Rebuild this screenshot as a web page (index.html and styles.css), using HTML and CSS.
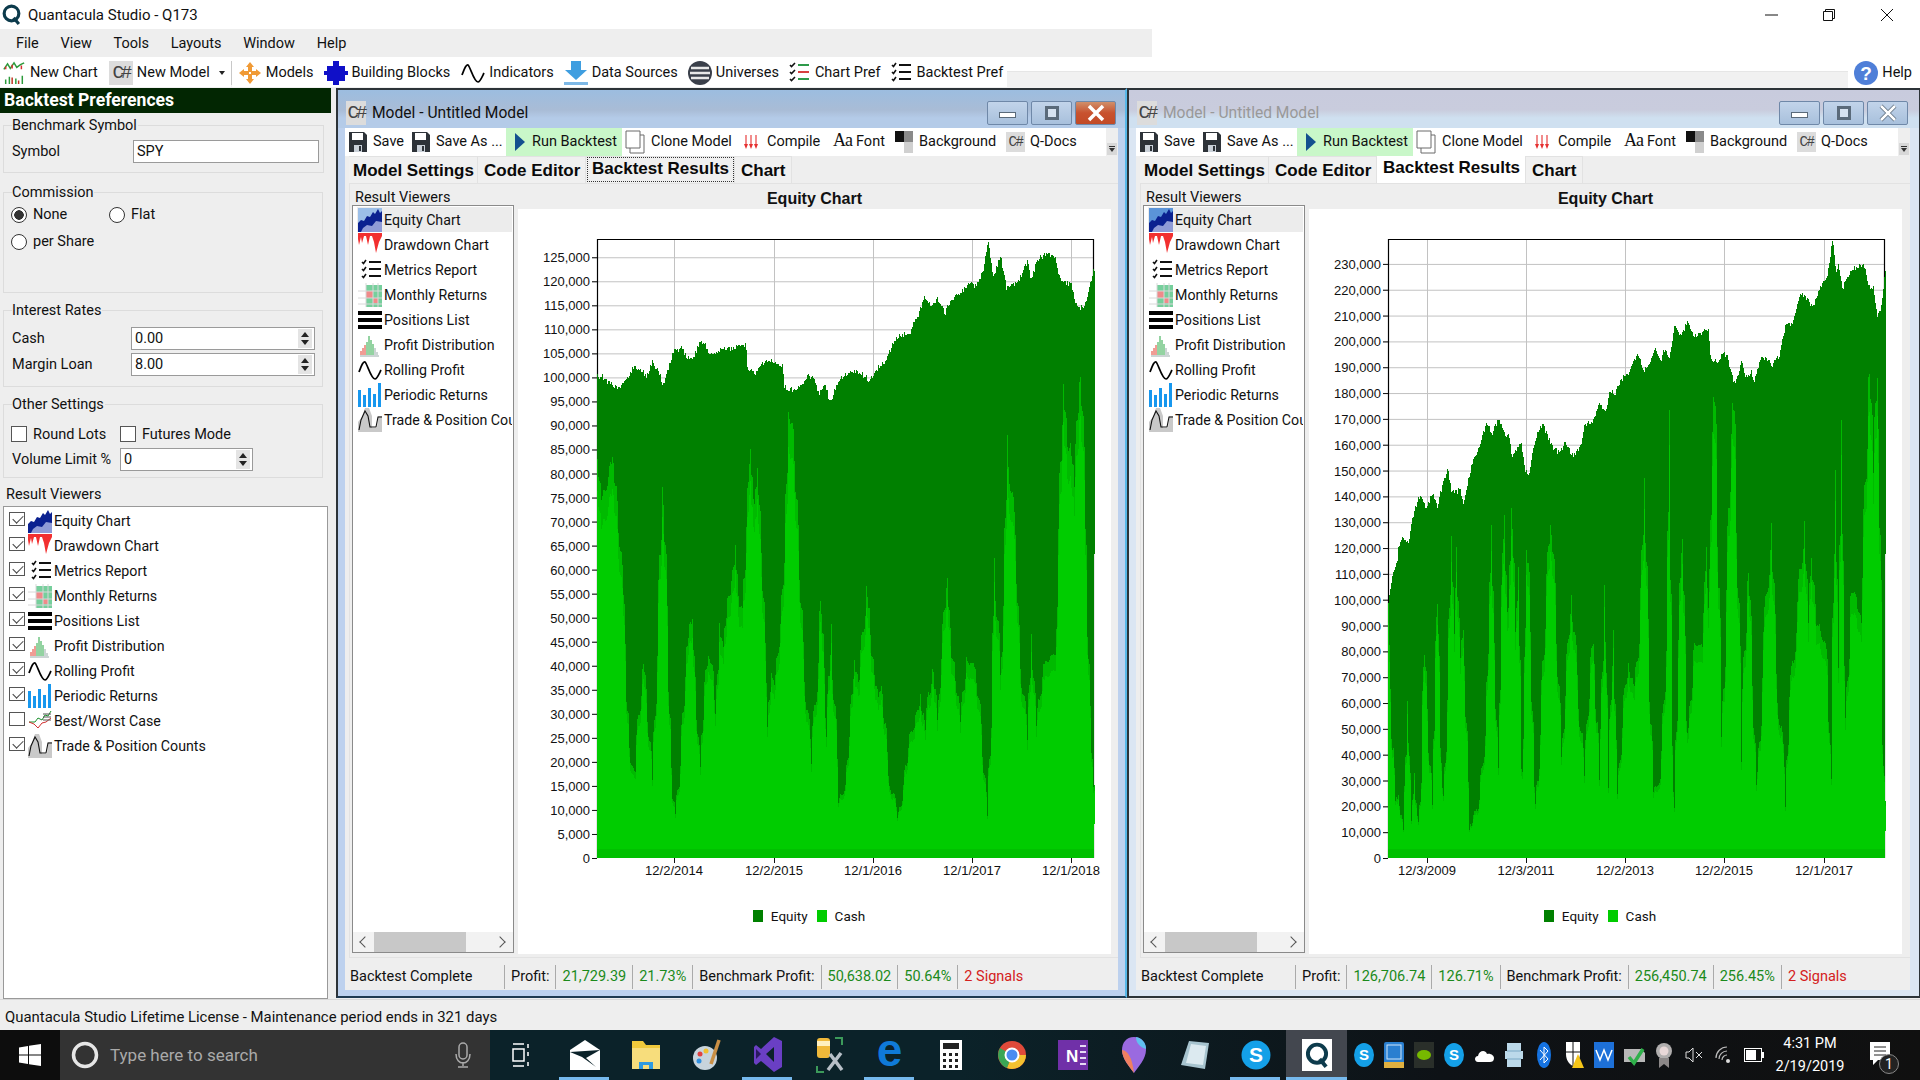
FILE: index.html
```html
<!DOCTYPE html>
<html lang="en">
<head>
<meta charset="utf-8">
<title>Quantacula Studio - Q173</title>
<link rel="stylesheet" href="styles.css">
</head>
<body>
<svg class="defs" width="0" height="0" aria-hidden="true">
  <symbol id="i-equity" viewBox="0 0 24 24"><path fill="#8f9bd6" d="M0 24V17L6 14 12 15 18 12 24 13V24Z"/><path fill="#0b2190" d="M0 24V15L3 12 6 13 9 8 12 9 15 4 17 6 20 1 22 5 24 3V14L18 13 14 18 9 17 5 20 3 24Z"/></symbol>
  <symbol id="i-drawdown" viewBox="0 0 24 24"><path fill="#f23030" d="M0 0H24V3L21 9 18 20 16 9 14 3 12 3 10 12 8 3 6 3 4 10 3 4 1 12 0 6Z"/></symbol>
  <symbol id="i-metrics" viewBox="0 0 24 24"><path fill="none" stroke="#111" stroke-width="1.6" d="M4 4l1.5 1.5L8 2M4 11l1.5 1.5L8 9M4 18l1.500 1.500L8 16"/><path fill="none" stroke="#111" stroke-width="2" d="M11 4H23M11 11H23M11 18H23"/></symbol>
  <symbol id="i-monthly" viewBox="0 0 24 24"><path fill="#76cf9c" d="M8 2H24V24H8Z"/><path fill="#f08a8a" d="M8 8H15V15H8ZM15 15H20V20H15Z"/><path stroke="#d8d8d8" fill="none" d="M0 8H24M0 15H24M0 21H24M8 0V24M15 0V24M20 0V24"/></symbol>
  <symbol id="i-positions" viewBox="0 0 24 24"><path d="M0 3H24V7H0ZM0 10H24V14H0ZM0 17H24V21H0Z"/></symbol>
  <symbol id="i-dist" viewBox="0 0 24 24"><path stroke="#e03a2a" fill="none" d="M3 22V18M5 22V15M7 22V12"/><path stroke="#28a745" fill="none" d="M9 22V9M11 22V3M13 22V7M15 22V11"/><path stroke="#9aa" fill="none" d="M17 22V15M19 22V19M2 23H21"/></symbol>
  <symbol id="i-rolling" viewBox="0 0 24 24"><path fill="none" stroke="#000" stroke-width="1.7" d="M1 14C3 9 5 3 7 4 9 5 13 21 17 21 19 21 21 16 23 12"/></symbol>
  <symbol id="i-periodic" viewBox="0 0 24 24"><path fill="#1797ee" d="M0 7H3V24H0ZM5 12H8V24H5ZM10 5H13V24H10ZM15 11H18V24H15ZM20 0H23V24H20Z"/></symbol>
  <symbol id="i-best" viewBox="0 0 24 24"><path fill="none" stroke="#1a8f2d" d="M1 13L7 13 10 9 14 11 17 6 20 7 23 2"/><path fill="none" stroke="#d23030" d="M1 13L6 15 10 19 14 14 18 13 23 9"/><path fill="none" stroke="#555" d="M15 5H23M15 8H23M15 11H23"/></symbol>
  <symbol id="i-trade" viewBox="0 0 24 24"><path fill="#c9c9c9" d="M0 24V14L4 9 7 0H11L14 8V20H19L20 8H24V24Z"/><path fill="none" stroke="#111" stroke-width="1.1" d="M1 22L3 12 7 3 10 8 12 19H18L20 9H24"/></symbol>
  <symbol id="i-save" viewBox="0 0 18 22"><path fill="#2d3238" d="M0 1H15L18 4V21H0Z"/><path fill="#fff" d="M3 2H14V9H3Z"/><path fill="#c9d0d8" d="M5 14H13V21H5Z"/><path fill="#2d3238" d="M10 15H12V20H10Z"/></symbol>
  <symbol id="i-clone" viewBox="0 0 20 24"><path fill="#fff" stroke="#6a6a6a" d="M5 5H19V23H5Z"/><path fill="#fff" stroke="#6a6a6a" d="M1 1H15V18H1Z"/></symbol>
  <symbol id="i-compile" viewBox="0 0 14 16"><path fill="none" stroke="#e63030" stroke-width="1.1" d="M2 1V11M7 1V11M12 1V11"/><path fill="#e63030" d="M0 10H4L2 15ZM5 10H9L7 15ZM10 10H14L12 15Z"/></symbol>
  <symbol id="i-bg" viewBox="0 0 18 22"><path fill="#111" d="M0 0H9V11H0Z"/><path fill="#8a8a8a" d="M9 0H18V11H9Z"/><path fill="#fff" d="M0 11H9V22H0Z"/><path fill="#d0d0d0" d="M9 11H18V22H9Z"/></symbol>
  <symbol id="i-run" viewBox="0 0 10 18"><path fill="#13508f" d="M0 0L10 9 0 18Z"/></symbol>
</svg>

<div class="titlebar">
  <svg class="q-logo" viewBox="0 0 18 20"><circle cx="9" cy="9" r="7" fill="none" stroke="#0d3b4c" stroke-width="3"/><path d="M11 13L16 19" stroke="#0d3b4c" stroke-width="3"/></svg>
  <span class="app-title">Quantacula Studio - Q173</span>
  <div class="sys-btns">
    <svg width="14" height="14" viewBox="0 0 14 14"><path d="M1 7H14" stroke="#111"/></svg>
    <svg width="14" height="14" viewBox="0 0 14 14"><path fill="none" stroke="#111" d="M1.500 3.500H10.500V12.500H1.500ZM3.500 3.500V1.500H12.500V10.500H10.500"/></svg>
    <svg width="14" height="14" viewBox="0 0 14 14"><path d="M1 1L13 13M13 1L1 13" stroke="#111"/></svg>
  </div>
</div>

<div class="menubar">
  <span>File</span><span>View</span><span>Tools</span><span>Layouts</span><span>Window</span><span>Help</span>
</div>

<div class="toolbar">
  <div class="tb-item tb-first">
    <svg class="tb-ico" viewBox="0 0 24 26"><path fill="none" stroke="#2b9a3a" stroke-width="1.6" d="M1 9L5 3 8 8 12 2 15 7 19 4 23 2"/><path fill="none" stroke="#d83030" stroke-width="1.6" d="M3 9V6M10 8V4M20 9V5"/><path stroke="#2b9a3a" stroke-width="1.600" d="M3 25V20M7 25V17M14 25V19M21 25V16"/><path stroke="#c23020" stroke-width="1.600" d="M10 25V18M17 25V21"/></svg>
    <span>New Chart</span>
  </div>
  <div class="tb-item tb-model"><span class="cs cs-main">C#</span><span>New Model</span><span class="caret"></span></div>
  <span class="tb-sep"></span>
  <div class="tb-item">
    <svg class="tb-ico" viewBox="0 0 24 24"><path fill="#f09a35" d="M12 1L16 6H14V10H18V8L23 12 18 16V14H14V18H16L12 23 8 18H10V14H6V16L1 12 6 8V10H10V6H8Z"/><path fill="#fff" d="M11 11H13V13H11Z"/></svg>
    <span>Models</span>
  </div>
  <div class="tb-item">
    <svg class="tb-ico" viewBox="0 0 24 24"><path fill="#1010c8" d="M9 0H15V5H21V10H24V14H21V20H15V24H9V20H3V14H0V10H3V5H9Z"/></svg>
    <span>Building Blocks</span>
  </div>
  <div class="tb-item">
    <svg class="tb-ico" viewBox="0 0 24 24"><use href="#i-rolling"/></svg>
    <span>Indicators</span>
  </div>
  <div class="tb-item">
    <svg class="tb-ico" viewBox="0 0 24 24"><path fill="#3f9ee0" d="M7 0H17V9H23L12 19 1 9H7Z"/><path fill="#7db8e6" d="M0 21H24V24H0Z"/></svg>
    <span>Data Sources</span>
  </div>
  <div class="tb-item">
    <svg class="tb-ico" viewBox="0 0 24 24"><circle cx="12" cy="12" r="12" fill="#3a3f4a"/><path d="M3 7H21M2 12H22M3 17H21" stroke="#e8e8e8" stroke-width="2.400"/></svg>
    <span>Universes</span>
  </div>
  <div class="tb-item">
    <svg class="tb-ico" viewBox="0 0 24 24"><path fill="none" stroke="#111" stroke-width="1.600" d="M3 4l1.500 1.500L8 2M3 11l1.500 1.500L8 9M3 18l1.500 1.500L8 16"/><path fill="none" stroke="#2e9a4a" stroke-width="2" d="M11 4H22M11 18H22"/><path fill="none" stroke="#d84040" stroke-width="2" d="M11 11H22"/></svg>
    <span>Chart Pref</span>
  </div>
  <div class="tb-item">
    <svg class="tb-ico" viewBox="0 0 24 24"><use href="#i-metrics"/></svg>
    <span>Backtest Pref</span>
  </div>
  <div class="tb-help">
    <svg class="tb-ico" viewBox="0 0 24 24"><circle cx="12" cy="12" r="12" fill="#4f7fd8"/><text x="12" y="19" class="help-q">?</text></svg>
    <span>Help</span>
  </div>
</div>

<div class="workspace">
  <aside class="prefs">
    <h2 class="prefs-head">Backtest Preferences</h2>

    <fieldset class="grp grp-bench">
      <legend>Benchmark Symbol</legend>
      <div class="form-row"><label>Symbol</label><div class="input">SPY</div></div>
    </fieldset>

    <fieldset class="grp grp-comm">
      <legend>Commission</legend>
      <div class="radio-grid">
        <div class="opt"><span class="radio on"></span>None</div>
        <div class="opt"><span class="radio"></span>Flat</div>
        <div class="opt"><span class="radio"></span>per Share</div>
      </div>
    </fieldset>

    <fieldset class="grp grp-rates">
      <legend>Interest Rates</legend>
      <div class="rate-rows">
        <div class="form-row form-rate"><label>Cash</label><div class="input spin">0.00<span class="spinner"><i class="up"></i><i class="down"></i></span></div></div>
        <div class="form-row form-rate"><label>Margin Loan</label><div class="input spin">8.00<span class="spinner"><i class="up"></i><i class="down"></i></span></div></div>
      </div>
    </fieldset>

    <fieldset class="grp grp-other">
      <legend>Other Settings</legend>
      <div class="check-row">
        <div class="opt opt-lots"><span class="cb big"></span>Round Lots</div>
        <div class="opt"><span class="cb big"></span>Futures Mode</div>
      </div>
      <div class="form-row form-vol"><label>Volume Limit %</label><div class="input spin">0<span class="spinner"><i class="up"></i><i class="down"></i></span></div></div>
    </fieldset>

    <div class="rv-label">Result Viewers</div>
    <div class="rv-list">
      <div class="rv-row"><span class="cb on"></span><svg class="ico"><use href="#i-equity"/></svg>Equity Chart</div>
      <div class="rv-row"><span class="cb on"></span><svg class="ico"><use href="#i-drawdown"/></svg>Drawdown Chart</div>
      <div class="rv-row"><span class="cb on"></span><svg class="ico"><use href="#i-metrics"/></svg>Metrics Report</div>
      <div class="rv-row"><span class="cb on"></span><svg class="ico"><use href="#i-monthly"/></svg>Monthly Returns</div>
      <div class="rv-row"><span class="cb on"></span><svg class="ico"><use href="#i-positions"/></svg>Positions List</div>
      <div class="rv-row"><span class="cb on"></span><svg class="ico"><use href="#i-dist"/></svg>Profit Distribution</div>
      <div class="rv-row"><span class="cb on"></span><svg class="ico"><use href="#i-rolling"/></svg>Rolling Profit</div>
      <div class="rv-row"><span class="cb on"></span><svg class="ico"><use href="#i-periodic"/></svg>Periodic Returns</div>
      <div class="rv-row"><span class="cb"></span><svg class="ico"><use href="#i-best"/></svg>Best/Worst Case</div>
      <div class="rv-row"><span class="cb on"></span><svg class="ico"><use href="#i-trade"/></svg>Trade &amp; Position Counts</div>
    </div>
  </aside>

  <section class="win win-active">
    <div class="win-title">
      <span class="cs cs-title">C#</span>
      <span class="win-name">Model - Untitled Model</span>
      <div class="win-btns">
        <span class="wb"><i class="wb-min"></i></span>
        <span class="wb"><i class="wb-max"></i></span>
        <span class="wb wb-close"><svg width="18" height="18" viewBox="0 0 18 18"><path d="M2 2L16 16M16 2L2 16" stroke="#fff" stroke-width="3.500"/></svg></span>
      </div>
    </div>
    <div class="win-tools">
      <div class="wt wt-save"><svg class="wt-ico"><use href="#i-save"/></svg>Save</div>
      <div class="wt wt-saveas"><svg class="wt-ico"><use href="#i-save"/></svg>Save As ...</div>
      <div class="wt wt-run"><svg class="run-ico"><use href="#i-run"/></svg>Run Backtest</div>
      <div class="wt wt-clone"><svg class="clone-ico"><use href="#i-clone"/></svg>Clone Model</div>
      <div class="wt wt-compile"><svg class="comp-ico"><use href="#i-compile"/></svg>Compile</div>
      <div class="wt wt-font"><span class="aa">Aa</span>Font</div>
      <div class="wt wt-bg"><svg class="wt-ico"><use href="#i-bg"/></svg>Background</div>
      <div class="wt wt-docs"><span class="cs cs-tool">C#</span>Q-Docs</div>
      <div class="overflow"><i></i></div>
    </div>
    <div class="tabs">
      <span class="tab">Model Settings</span><span class="tab">Code Editor</span><span class="tab tab-focus">Backtest Results</span><span class="tab">Chart</span>
    </div>
    <div class="pane">
      <div class="pane-left">
        <div class="pane-label">Result Viewers</div>
        <div class="viewer-list">
          <div class="viewer-rows">
            <div class="v-row v-sel"><svg class="ico ico-sel"><use href="#i-equity"/></svg>Equity Chart</div>
            <div class="v-row"><svg class="ico"><use href="#i-drawdown"/></svg>Drawdown Chart</div>
            <div class="v-row"><svg class="ico"><use href="#i-metrics"/></svg>Metrics Report</div>
            <div class="v-row"><svg class="ico"><use href="#i-monthly"/></svg>Monthly Returns</div>
            <div class="v-row"><svg class="ico"><use href="#i-positions"/></svg>Positions List</div>
            <div class="v-row"><svg class="ico"><use href="#i-dist"/></svg>Profit Distribution</div>
            <div class="v-row"><svg class="ico"><use href="#i-rolling"/></svg>Rolling Profit</div>
            <div class="v-row"><svg class="ico"><use href="#i-periodic"/></svg>Periodic Returns</div>
            <div class="v-row"><svg class="ico"><use href="#i-trade"/></svg>Trade &amp; Position Counts</div>
          </div>
          <div class="hscroll"><span class="chev chev-l"></span><span class="thumb"></span><span class="chev chev-r"></span></div>
        </div>
      </div>
      <div class="pane-right">
        <div class="chart-title">Equity Chart</div>
        <div class="chart-box">
          <svg class="chart" id="chart1" viewBox="518 209 593 690"></svg>
          <div class="legend"><i class="sw sw-eq"></i><span>Equity</span><i class="sw sw-cash"></i><span>Cash</span></div>
        </div>
      </div>
    </div>
    <div class="win-status">
      <span class="st st-first">Backtest Complete</span>
      <span class="st">Profit:</span>
      <span class="st st-g">21,729.39</span>
      <span class="st st-g">21.73%</span>
      <span class="st">Benchmark Profit:</span>
      <span class="st st-g">50,638.02</span>
      <span class="st st-g">50.64%</span>
      <span class="st st-r">2 Signals</span>
    </div>
  </section>

  <section class="win win-inactive">
    <div class="win-title">
      <span class="cs cs-title">C#</span>
      <span class="win-name">Model - Untitled Model</span>
      <div class="win-btns">
        <span class="wb"><i class="wb-min"></i></span>
        <span class="wb"><i class="wb-max"></i></span>
        <span class="wb"><svg width="18" height="18" viewBox="0 0 18 18"><path d="M2 2L16 16M16 2L2 16" stroke="#5a6a7a" stroke-width="4"/><path d="M2 2L16 16M16 2L2 16" stroke="#fff" stroke-width="2.500"/></svg></span>
      </div>
    </div>
    <div class="win-tools">
      <div class="wt wt-save"><svg class="wt-ico"><use href="#i-save"/></svg>Save</div>
      <div class="wt wt-saveas"><svg class="wt-ico"><use href="#i-save"/></svg>Save As ...</div>
      <div class="wt wt-run"><svg class="run-ico"><use href="#i-run"/></svg>Run Backtest</div>
      <div class="wt wt-clone"><svg class="clone-ico"><use href="#i-clone"/></svg>Clone Model</div>
      <div class="wt wt-compile"><svg class="comp-ico"><use href="#i-compile"/></svg>Compile</div>
      <div class="wt wt-font"><span class="aa">Aa</span>Font</div>
      <div class="wt wt-bg"><svg class="wt-ico"><use href="#i-bg"/></svg>Background</div>
      <div class="wt wt-docs"><span class="cs cs-tool">C#</span>Q-Docs</div>
      <div class="overflow"><i></i></div>
    </div>
    <div class="tabs">
      <span class="tab">Model Settings</span><span class="tab">Code Editor</span><span class="tab tab-white">Backtest Results</span><span class="tab">Chart</span>
    </div>
    <div class="pane">
      <div class="pane-left">
        <div class="pane-label">Result Viewers</div>
        <div class="viewer-list">
          <div class="viewer-rows">
            <div class="v-row v-sel"><svg class="ico ico-sel2"><use href="#i-equity"/></svg>Equity Chart</div>
            <div class="v-row"><svg class="ico"><use href="#i-drawdown"/></svg>Drawdown Chart</div>
            <div class="v-row"><svg class="ico"><use href="#i-metrics"/></svg>Metrics Report</div>
            <div class="v-row"><svg class="ico"><use href="#i-monthly"/></svg>Monthly Returns</div>
            <div class="v-row"><svg class="ico"><use href="#i-positions"/></svg>Positions List</div>
            <div class="v-row"><svg class="ico"><use href="#i-dist"/></svg>Profit Distribution</div>
            <div class="v-row"><svg class="ico"><use href="#i-rolling"/></svg>Rolling Profit</div>
            <div class="v-row"><svg class="ico"><use href="#i-periodic"/></svg>Periodic Returns</div>
            <div class="v-row"><svg class="ico"><use href="#i-trade"/></svg>Trade &amp; Position Counts</div>
          </div>
          <div class="hscroll"><span class="chev chev-l"></span><span class="thumb"></span><span class="chev chev-r"></span></div>
        </div>
      </div>
      <div class="pane-right">
        <div class="chart-title">Equity Chart</div>
        <div class="chart-box">
          <svg class="chart" id="chart2" viewBox="1309 209 593 690"></svg>
          <div class="legend"><i class="sw sw-eq"></i><span>Equity</span><i class="sw sw-cash"></i><span>Cash</span></div>
        </div>
      </div>
    </div>
    <div class="win-status">
      <span class="st st-first">Backtest Complete</span>
      <span class="st">Profit:</span>
      <span class="st st-g">126,706.74</span>
      <span class="st st-g">126.71%</span>
      <span class="st">Benchmark Profit:</span>
      <span class="st st-g">256,450.74</span>
      <span class="st st-g">256.45%</span>
      <span class="st st-r">2 Signals</span>
    </div>
  </section>
</div>

<div class="statusbar">Quantacula Studio Lifetime License - Maintenance period ends in 321 days</div>

<div class="taskbar">
  <div class="tk-start"><svg width="22" height="22" viewBox="0 0 22 22"><path fill="#fff" d="M0 3.500L9 2V10.500H0ZM10 1.800L22 0V10.500H10ZM0 11.500H9V20L0 18.500ZM10 11.500H22V22L10 20.200Z"/></svg></div>
  <div class="tk-search">
    <svg class="cortana" width="28" height="28" viewBox="0 0 28 28"><circle cx="14" cy="14" r="11.500" fill="none" stroke="#e6e6e6" stroke-width="3.500"/></svg>
    <span class="search-text">Type here to search</span>
    <svg class="mic" width="16" height="26" viewBox="0 0 16 26"><rect x="4" y="1" width="8" height="16" rx="4" fill="none" stroke="#aaa" stroke-width="1.500"/><path d="M1 12C1 24 15 24 15 12M8 20V24M3 25H13" fill="none" stroke="#aaa" stroke-width="1.500"/></svg>
  </div>
  <div class="tk-view"><svg width="20" height="24" viewBox="0 0 20 24"><path fill="none" stroke="#fff" stroke-width="1.500" d="M1 1H12M1 23H12M1 6H12V18H1ZM16 1V5M16 9V13M16 19V23"/></svg></div>
  <div class="tile tile-open"><svg width="30" height="30" viewBox="0 0 30 30"><path fill="#fff" d="M0 10L15 0 30 10V30H0Z"/><path fill="#0b2229" d="M0 12L30 10 16 18 26 27 12 17Z"/></svg></div>
  <div class="tile"><svg width="30" height="30" viewBox="0 0 30 30"><path fill="#f0c93c" d="M1 1H12L15 5H29V29H1Z"/><path fill="#f7dd7c" d="M1 8H29V29H1Z"/><path fill="#2f9ae0" d="M8 22H22V29H18V25H12V29H8Z"/></svg></div>
  <div class="tile"><svg width="30" height="32" viewBox="0 0 30 32"><ellipse cx="13" cy="19" rx="12" ry="12" fill="#c8d4dc"/><circle cx="8" cy="15" r="2.500" fill="#e04040"/><circle cx="14" cy="12" r="2.500" fill="#f0c030"/><circle cx="7" cy="22" r="2.500" fill="#3090e0"/><path d="M27 1L19 25" stroke="#c98f45" stroke-width="3.500"/></svg></div>
  <div class="tile tile-open"><svg width="28" height="36" viewBox="0 0 28 36"><path fill="#6a3fc4" d="M20 0L28 4V30L20 35 7 24 2 28 0 26V10L2 8 7 12ZM20 10L12 17 20 25Z"/><path fill="#2a1a60" d="M2 12L7 17 2 22Z"/></svg></div>
  <div class="tile"><svg width="30" height="38" viewBox="0 0 30 38"><rect x="3" y="2" width="13" height="20" rx="3" fill="#f0b93a"/><rect x="3" y="5" width="13" height="5" fill="#fff0c0"/><path d="M21 2H28V9M3 30V36H10" fill="none" stroke="#3c9a5a" stroke-width="2"/><path d="M14 34L27 17M16 18L28 34" stroke="#b8c0c8" stroke-width="3.500"/></svg></div>
  <div class="tile tile-open"><span class="edge-e">e</span></div>
  <div class="tile"><svg width="22" height="30" viewBox="0 0 22 30"><path fill="#fff" d="M0 0H22V30H0Z"/><path fill="#222" d="M3 3H19V9H3ZM3 13H6V16H3ZM9 13H12V16H9ZM15 13H18V16H15ZM3 19H6V22H3ZM9 19H12V22H9ZM15 19H18V22H15ZM3 25H6V28H3ZM9 25H12V28H9ZM15 25H18V28H15Z"/></svg></div>
  <div class="tile"><svg width="28" height="28" viewBox="0 0 28 28"><circle cx="14" cy="14" r="14" fill="#e04a3a"/><path fill="#f3c12f" d="M14 14L28 14A14 14 0 0 1 9 27Z"/><path fill="#3aa655" d="M14 14L9 27A14 14 0 0 1 2 7Z"/><circle cx="14" cy="14" r="6.500" fill="#4a8cf0" stroke="#fff" stroke-width="2"/></svg></div>
  <div class="tile"><svg width="30" height="30" viewBox="0 0 30 30"><rect width="30" height="30" fill="#7030a8"/><text x="8" y="22" class="one-n">N</text><path d="M22 6H28M22 12H28M22 18H28M22 24H28" stroke="#e6d8f4" stroke-width="2"/></svg></div>
  <div class="tile"><svg width="24" height="36" viewBox="0 0 24 36"><path fill="#9a6ae0" d="M12 0C20 0 24 6 24 13 24 22 16 30 12 36 8 30 0 22 0 13 0 6 4 0 12 0Z"/><path fill="#f08060" d="M0 13C6 14 10 20 12 36 8 30 0 22 0 13Z"/><path fill="#60c0f0" d="M14 0C20 1 24 6 24 12 18 10 14 6 14 0Z"/></svg></div>
  <div class="tile"><svg width="28" height="32" viewBox="0 0 28 32"><path fill="#a7c4cf" d="M8 2L28 4 24 30 0 26Z"/><path fill="#dceaf0" d="M10 5L25 7 22 26 5 24Z"/></svg></div>
  <div class="tile tile-open"><svg width="30" height="30" viewBox="0 0 30 30"><circle cx="15" cy="15" r="14.500" fill="#14a0e8"/><text x="15" y="22" class="sky-s">S</text></svg></div>
  <div class="tile tile-q"><div class="q-box"><svg width="24" height="26" viewBox="0 0 18 20"><circle cx="9" cy="9" r="7" fill="none" stroke="#0d3b4c" stroke-width="3"/><path d="M11 13L16 19" stroke="#0d3b4c" stroke-width="3"/></svg></div></div>

  <div class="tray">
    <svg width="20" height="26" viewBox="0 0 20 26"><ellipse cx="10" cy="13" rx="10" ry="12" fill="#14a0e8"/><text x="10" y="18" class="tray-s">S</text></svg>
    <svg width="20" height="26" viewBox="0 0 20 26"><rect width="20" height="26" rx="2" fill="#2a7fd0"/><rect x="3" y="3" width="14" height="14" fill="none" stroke="#cfe6f8"/><rect y="20" width="20" height="6" fill="#e0b040"/></svg>
    <svg width="20" height="26" viewBox="0 0 20 26"><rect width="20" height="26" fill="#2a2f2a"/><ellipse cx="10" cy="13" rx="7" ry="5" fill="#76b900"/></svg>
    <svg width="20" height="26" viewBox="0 0 20 26"><ellipse cx="10" cy="13" rx="10" ry="12" fill="#14a0e8"/><text x="10" y="18" class="tray-s">S</text></svg>
    <svg width="20" height="14" viewBox="0 0 20 14"><path fill="#fff" d="M4 14C0 14 0 8 4 8 5 3 11 1 13 6 17 5 20 8 20 10 20 13 18 14 16 14Z"/></svg>
    <svg width="18" height="24" viewBox="0 0 18 24"><path fill="#bcd9ea" d="M2 0H16V8H18V16H16V24H2V16H0V8H2Z"/><path stroke="#7aa8c4" d="M2 8H16M2 16H16"/></svg>
    <svg width="14" height="26" viewBox="0 0 14 26"><ellipse cx="7" cy="13" rx="7" ry="13" fill="#1572e0"/><path fill="none" stroke="#fff" d="M3 8L11 17 7 21V5L11 9 3 18"/></svg>
    <svg width="20" height="26" viewBox="0 0 20 26"><path fill="#fff" d="M2 0H16V12C16 18 12 22 9 24 5 22 2 18 2 12Z"/><path stroke="#111" d="M9 0V24M2 10H16"/><path fill="#f5c518" d="M14 12L20 26H8Z"/></svg>
    <svg width="20" height="26" viewBox="0 0 20 26"><rect width="20" height="26" fill="#1d70d8"/><path fill="none" stroke="#fff" stroke-width="1.500" d="M2 8L6 18 10 8 14 18 18 8"/></svg>
    <svg width="22" height="22" viewBox="0 0 22 22"><path fill="#b8b8b8" d="M1 5H18L22 9V18H1Z"/><path fill="none" stroke="#2fb04a" stroke-width="3.500" d="M6 13L11 19 20 5"/></svg>
    <svg width="18" height="26" viewBox="0 0 18 26"><circle cx="9" cy="9" r="8" fill="#b0aeae"/><circle cx="9" cy="9" r="4.500" fill="#e8d8d8"/><path fill="#8c8888" d="M4 16H14V26L9 22 4 26Z"/></svg>
    <svg width="18" height="18" viewBox="0 0 18 18"><path fill="none" stroke="#ddd" d="M1 6H4L8 2V16L4 12H1ZM11 6L17 12M17 6L11 12"/></svg>
    <svg width="18" height="18" viewBox="0 0 18 18"><path fill="none" stroke="#bbb" stroke-width="1.200" d="M1 12A11 11 0 0 1 12 1M4 13A8 8 0 0 1 12 5M7 14A5 5 0 0 1 12 9"/><circle cx="13" cy="15" r="2" fill="#ddd"/></svg>
    <svg width="20" height="14" viewBox="0 0 20 14"><rect x=".5" y=".5" width="17" height="13" fill="none" stroke="#fff"/><rect x="2" y="2" width="10" height="10" fill="#fff"/><rect x="18" y="4" width="2" height="6" fill="#fff"/></svg>
  </div>
  <div class="clock"><span>4:31 PM</span><span>2/19/2019</span></div>
  <div class="notif">
    <svg width="20" height="26" viewBox="0 0 20 26"><path fill="#fff" d="M0 0H20V18H8L3 23V18H0Z"/><path stroke="#222" d="M4 5H16M4 9H16M4 13H16"/></svg>
    <span class="notif-badge">1</span>
  </div>
</div>
<script src="chart.js"></script>
</body>
</html>
```
FILE: styles.css
```css
* { box-sizing: border-box; }
html, body { margin: 0; padding: 0; }
body {
  width: 1920px; height: 1080px; overflow: hidden;
  display: flex; flex-direction: column;
  background: #fff; color: #111;
  font: 14.5px/18px Roboto, "Liberation Sans", sans-serif;
}
.defs { position: absolute; }
i { display: block; }

/* title + menu + toolbar */
.titlebar { height: 29px; display: flex; align-items: center; padding-left: 2px; }
.q-logo { width: 19px; height: 21px; margin-right: 7px; }
.app-title { font-size: 15px; }
.sys-btns { margin-left: auto; width: 156px; padding-right: 26px; display: flex; justify-content: space-between; }
.menubar { height: 28px; width: 1152px; background: #eee; display: flex; align-items: center; gap: 21.7px; padding: 2px 0 0 16px; }
.toolbar {
  height: 31px; display: flex; align-items: center;
  background: linear-gradient(#fff 0, #fff 14px, #e6e6e6 14px, #e6e6e6 15px, #f1f1f1 15px);
}
.tb-item { display: flex; align-items: center; gap: 4px; height: 28px; background: #fff; padding: 0 4px 0 6px; flex: none; }
.tb-item:nth-child(9) { padding-right: 2px; }
.tb-item:nth-child(8) { padding-right: 2px; }
.tb-item:nth-child(5) { padding-right: 5px; }
.tb-first { padding-left: 2px; }
.tb-model { padding-left: 7px; }
.tb-ico { width: 24px; height: 24px; flex: none; }
.caret { width: 0; height: 0; border: 3px solid transparent; border-top: 4px solid #222; border-bottom: 0; margin: 0 2px 0 5px; }
.tb-sep { width: 1px; height: 24px; background: #c8c8c8; flex: none; }
.tb-help { margin-left: auto; display: flex; align-items: center; gap: 4px; height: 30px; padding: 0 8px 0 6px; background: #fff; }
.help-q { font: bold 19px "Liberation Sans", sans-serif; fill: #fff; text-anchor: middle; }
.cs { font-family: "Liberation Mono", monospace; color: #444; background: #dcdcdc; display: inline-block; text-align: center; flex: none; }
.cs-main { width: 24px; height: 24px; line-height: 24px; font-size: 19px; letter-spacing: -3px; }
.cs-title { width: 20px; height: 24px; line-height: 24px; font-size: 19px; letter-spacing: -3px; }
.cs-tool { width: 19px; height: 20px; line-height: 20px; font-size: 14px; letter-spacing: -1.5px; margin-right: 5px; }

/* workspace */
.workspace { height: 911px; display: flex; background: #eee; }
.prefs { width: 336px; flex: none; padding-right: 5px; }
.prefs-head { margin: 0; height: 25px; background: #022602; color: #fff; font: bold 17.6px/25px Roboto, sans-serif; padding-left: 4px; }
.grp { margin: 0 7px 0 3px; padding: 0 7px; border: 1px solid #dcdcdc; min-width: 0; }
.grp legend { padding: 0 1px 0 0; margin-left: 1px; line-height: 17px; height: 16px; }
.grp-bench { height: 56px; margin-top: 4px; margin-right: 7px; padding-top: 7px; }
.grp-comm { height: 109px; margin-top: 11px; margin-right: 8px; padding-top: 4px; }
.grp-rates { height: 85px; margin-top: 9px; margin-right: 8px; padding-top: 9px; }
.grp-other { height: 82px; margin-top: 9px; margin-right: 8px; padding-top: 14px; }
.form-row { display: grid; grid-template-columns: 121px 186px; align-items: center; padding-left: 1px; }
.form-row label { padding-top: 1px; }
.form-rate { grid-template-columns: 119px 184px; }
.rate-rows { display: flex; flex-direction: column; gap: 3px; }
.form-vol { grid-template-columns: 108px 133px; margin-top: 6px; }
.input { height: 23px; line-height: 22px; background: #fff; border: 1px solid #9a9a9a; padding-left: 3px; position: relative; }
.spinner { position: absolute; top: 1px; right: 2px; width: 14px; height: 19px; background: #e4e4e4; display: flex; flex-direction: column; gap: 3px; align-items: center; justify-content: center; }
.spinner .up { border: 4px solid transparent; border-top: 0; border-bottom: 5px solid #222; }
.spinner .down { border: 4px solid transparent; border-bottom: 0; border-top: 5px solid #222; }
.radio-grid { display: grid; grid-template-columns: 98px 1fr; row-gap: 5px; }
.opt { display: flex; align-items: center; gap: 6px; height: 22px; }
.radio { width: 16px; height: 16px; border-radius: 50%; border: 1px solid #333; background: #fff; flex: none; }
.radio.on { background: radial-gradient(circle, #333 0 4.500px, #fff 5px); }
.check-row { display: flex; height: 16px; align-items: center; }
.check-row .opt { height: 16px; padding-top: 1px; }
.check-row .cb { margin-top: -1px; }
.opt-lots { width: 109px; }
.cb { width: 16px; height: 14px; border: 1px solid #555; background: #fff; flex: none; position: relative; display: block; }
.cb.big { height: 16px; }
.rv-row .cb { margin-top: -3px; }
.cb.on::after { content: ""; position: absolute; left: 3px; top: 2px; width: 9px; height: 5px; border-left: 1.500px solid #444; border-bottom: 1.500px solid #444; transform: rotate(-45deg); }
.rv-label { margin: 8px 0 0 6px; height: 20px; line-height: 18px; }
.rv-list { margin: 0 3px; height: 493px; width: 325px; background: #fff; border: 1px solid #999; padding: 1px 0 0 5px; }
.rv-row { height: 25px; display: flex; align-items: center; font-size: 14.2px; }
.rv-row .ico { margin: 0 2px 0 3px; }
.ico { width: 24px; height: 24px; flex: none; }

/* child windows */
.win { display: flex; flex-direction: column; height: 910px; border: 2px solid #2c3338; padding: 0 7px 6px; }
.win-active { width: 791px; background: #bdd1ee; border-right-color: #58b8e8; border-bottom-color: #1f3a50; }
.win-inactive { width: 793px; background: #dbe6f3; padding-right: 9px; border-right: 1px solid #2c3338; }
.win-title { height: 38px; flex: none; display: flex; align-items: center; gap: 3px; background: linear-gradient(#9cbde0 0, #a9bcd6 20px, #b4cbe8 28px); margin: 0 -7px; padding: 8px 9px 0 8px; }
.win-name { font-size: 15.6px; margin-left: 3px; }
.win-inactive .win-title { background: linear-gradient(#c8cbdd 0, #c9ccdd 20px, #cfe0f0 28px); margin-right: -9px; padding-right: 11px; }
.win-inactive .win-name { color: #999; }
.win-btns { margin-left: auto; display: flex; gap: 3px; }
.wb { width: 41px; height: 24px; border: 1px solid #6f88a8; border-radius: 2px; background: linear-gradient(#c2d4ea, #a8c0dc); display: flex; align-items: center; justify-content: center; }
.wb-close { background: linear-gradient(#d08f6a 0, #c8522f 50%, #c24a26 100%); }
.wb-min { width: 17px; height: 6px; background: #fff; border: 1px solid #5a6a7a; margin-top: 4px; }
.wb-max { width: 14px; height: 14px; background: #d6e2f0; border: 3px solid #5a6a7a; }
.win-tools { height: 28px; flex: none; background: #fff; display: flex; align-items: center; position: relative; }
.wt { display: flex; align-items: center; height: 28px; flex: none; }
.wt-ico { width: 18px; height: 22px; margin-right: 6px; flex: none; }
.wt-save { width: 67px; padding-left: 4px; }
.wt-saveas { width: 94px; }
.wt-run { width: 116px; background: #c9f7c9; padding-left: 9px; }
.run-ico { width: 10px; height: 18px; margin-right: 7px; }
.wt-clone { width: 120px; padding-left: 3px; }
.clone-ico { width: 20px; height: 24px; margin-right: 6px; }
.wt-compile { width: 88px; padding-left: 2px; }
.comp-ico { width: 14px; height: 16px; margin-right: 9px; }
.wt-font { width: 62px; padding-left: 3px; }
.aa { font: 18px "Liberation Serif", serif; width: 23px; letter-spacing: -1px; margin-top: -3px; }
.wt-bg { width: 111px; padding-left: 3px; }
.wt-docs { padding-left: 3px; }
.overflow { margin-left: auto; width: 12px; height: 28px; background: #eee; display: flex; align-items: flex-end; }
.overflow i { width: 10px; height: 12px; margin: 0 1px 1px; background: #d8d8d8; position: relative; }
.overflow i::after { content: ""; position: absolute; left: 2px; top: 5px; border: 3px solid transparent; border-top: 4px solid #333; border-bottom: 0; }
.overflow i::before { content: ""; position: absolute; left: 2px; top: 3px; width: 6px; height: 1px; background: #333; }
.tabs { height: 27px; flex: none; display: grid; grid-template-columns: 129px 108px 149px 57px 1fr; padding-left: 4px; background: #eee; }
.tab { font: bold 17px/27px "Liberation Sans", sans-serif; padding-left: 6px; border: 1px solid #e2e2e2; border-left: 0; border-bottom: 0; background: #f0f0f0; white-space: nowrap; color: #0a0a0a; overflow: hidden; }
.tab:first-child { padding-left: 4px; }
.tab-focus { outline: 1px dotted #333; outline-offset: -2px; line-height: 24px; }
.tab-white { background: #fff; line-height: 24px; margin-top: -1px; }
.pane { height: 775px; flex: none; background: #eee; display: grid; grid-template-columns: 162px 593px; gap: 4px; padding-left: 7px; box-shadow: inset 4px 0 #eee, inset 5px 0 #e2e2e2, inset 0 1px #e2e2e2, inset 0 -1px #e2e2e2; }
.pane-left { display: flex; flex-direction: column; }
.pane-label { height: 22px; line-height: 29px; padding-left: 3px; }
.viewer-list { height: 748px; background: #fff; border: 1px solid #8a8a8a; display: flex; flex-direction: column; overflow: hidden; }
.viewer-rows { flex: 1; padding: 1px 1px 0 4px; }
.v-row { height: 25px; display: flex; align-items: center; gap: 2px; padding-left: 1px; white-space: nowrap; overflow: hidden; font-size: 14.2px; }
.v-sel { background: #ececec; }
.ico-sel { background: #9cbfe8; }
.ico-sel2 { background: #5b94d8; }
.hscroll { height: 20px; flex: none; display: flex; align-items: center; background: #f2f2f2; padding: 0 6px; }
.thumb { width: 92px; height: 20px; background: #c8c8c8; margin-left: 5px; }
.chev { width: 8px; height: 8px; border-left: 1.500px solid #555; border-bottom: 1.500px solid #555; transform: rotate(45deg); flex: none; margin-left: 2px; }
.chev-r { transform: rotate(225deg); margin-left: auto; margin-right: 3px; }
.pane-right { display: flex; flex-direction: column; }
.chart-title { height: 26px; text-align: center; font: bold 16px/31px "Liberation Sans", sans-serif; }
.chart-box { height: 745px; background: #fff; }
.chart { width: 593px; height: 690px; display: block; }
.chart text { font: 13px "Liberation Sans", sans-serif; fill: #111; }
.legend { display: flex; align-items: center; justify-content: center; gap: 8px; padding: 8px 10px 0 0; font: 13.500px/18px Roboto, sans-serif; }
.sw { width: 10px; height: 12px; }
.legend span { margin-right: 1px; }
.sw-eq { background: #008000; }
.sw-cash { background: #00cc00; }
.win-status { height: 32px; flex: none; padding-top: 5px; background: #eee; display: flex; align-items: center; white-space: nowrap; }
.st { height: 24px; line-height: 24px; border-left: 1px solid #aaa; padding: 0 6px; }
.st-first { width: 159px; border-left: 0; padding-left: 5px; }
.st-g { color: #1b8a1b; }
.st-r { color: #d42020; }

/* status + taskbar */
.statusbar { height: 31px; background: #eee; border-top: 1px solid #d8d8d8; line-height: 34px; padding-left: 5px; font-size: 14.9px; }
.taskbar { flex: none; display: flex; align-items: center; background: linear-gradient(90deg, #0b2229 0, #0b2229 50%, #0e1216 75%, #101010 100%); color: #fff; height: 50px; }
.tk-start { width: 60px; height: 50px; background: #0d0d0d; display: flex; align-items: center; justify-content: center; }
.tk-search { width: 430px; height: 50px; background: #333; display: flex; align-items: center; padding-left: 11px; }
.cortana { margin-right: 11px; }
.search-text { color: #aaa; font-size: 17px; }
.mic { margin-left: auto; margin-right: 19px; }
.tk-view { width: 64px; display: flex; justify-content: center; }
.tile { width: 61px; height: 50px; display: flex; align-items: center; justify-content: center; position: relative; flex: none; }
.tile-open::after { content: ""; position: absolute; left: 5px; right: 6px; bottom: 0; height: 3px; background: #76b9ed; }
.tile-q { background: #43474f; }
.tile-q::after { content: ""; position: absolute; left: 0; right: 0; bottom: 0; height: 3px; background: #76b9ed; }
.q-box { width: 30px; height: 32px; background: #fff; display: flex; align-items: center; justify-content: center; }
.edge-e { font: bold 46px/46px "Liberation Sans", sans-serif; color: #0f7ad8; margin-top: -10px; }
.one-n { font: bold 17px "Liberation Sans", sans-serif; fill: #fff; }
.sky-s { font: bold 21px "Liberation Sans", sans-serif; fill: #fff; text-anchor: middle; }
.tray-s { font: bold 15px "Liberation Sans", sans-serif; fill: #fff; text-anchor: middle; }
.tray { width: 422px; flex: none; display: grid; grid-template-columns: repeat(14, 30px); justify-items: center; align-items: center; padding-left: 2px; }
.clock { width: 82px; display: flex; flex-direction: column; align-items: center; font-size: 14.500px; line-height: 23px; flex: none; }
.notif { flex: 1; position: relative; height: 50px; display: flex; align-items: center; padding-left: 19px; }
.notif-badge { position: absolute; left: 28px; top: 24px; width: 20px; height: 20px; border-radius: 50%; border: 1px solid #888; background: #222; font-size: 14px; line-height: 18px; text-align: center; }
```
FILE: chart.js
```js
(function () {
  var NS = 'http://www.w3.org/2000/svg';
  var seed = 12345;
  function rnd() { seed = (seed * 1664525 + 1013904223) % 4294967296; return seed / 4294967296; }
  function el(svg, name, attrs, text) {
    var e = document.createElementNS(NS, name);
    for (var k in attrs) e.setAttribute(k, attrs[k]);
    if (text) e.textContent = text;
    svg.appendChild(e);
    return e;
  }
  // sharp: steep at both control points, so peaks and valleys become narrow cusps
  function interp(pts, x, sharp) {
    for (var i = 1; i < pts.length; i++) {
      if (x <= pts[i][0]) {
        var a = pts[i - 1], b = pts[i];
        var t = (x - a[0]) / Math.max(b[0] - a[0], .01);
        t = Math.max(0, Math.min(1, t));
        if (sharp) { t = .5 + 4 * Math.pow(t - .5, 3); }
        return a[1] + (b[1] - a[1]) * t;
      }
    }
    return pts[pts.length - 1][1];
  }
  function fmt(n) { return String(n).replace(/\B(?=(\d{3})+$)/g, ','); }

  function draw(c) {
    var svg = document.getElementById(c.id);
    var L = c.left, R = c.right, T = 239, B = 858;
    var v, y, x;
    for (v = c.step; v <= c.max; v += c.step) {
      y = B - v * c.ppu;
      el(svg, 'path', { d: 'M' + (L - 5) + ' ' + (y + .5) + 'H' + R, stroke: '#c2c2c2', fill: 'none' });
    }
    c.dates.forEach(function (d) {
      el(svg, 'path', { d: 'M' + (d[0] + .5) + ' ' + T + 'V' + (B + 5), stroke: '#c2c2c2', fill: 'none' });
    });
    el(svg, 'path', { d: 'M' + (L + .5) + ' ' + B + 'V' + (T + .5) + 'H' + (R + .5) + 'V' + B, stroke: '#000', fill: 'none', 'stroke-width': 1.2 });

    var sx = 2.613;
    function fx(z) { return c.crop + z / sx; }
    var eq = c.equity.map(function (p) { return [fx(p[0]), c.top + p[1] / 3]; });
    var cash = c.cash.map(function (p) { return [fx(p[0]), 560 + p[1] / 3]; });
    var de = 'M' + L + ' ' + B, dc = de, dc2 = de;
    for (x = L; x <= R + 1; x += 1) {
      var ye = interp(eq, x, false) + (rnd() - .5) * 5.5;
      de += 'L' + x + ' ' + ye.toFixed(1) + 'H' + (x + 1);
      var yc = Math.min(interp(cash, x, true) + (rnd() - .5) * 3, B - 2);
      yc = Math.max(yc, ye);
      dc += 'L' + x + ' ' + yc.toFixed(1) + 'H' + (x + 1);
      dc2 += 'L' + x + ' ' + (yc + (B - yc) * .08).toFixed(1) + 'H' + (x + 1);
    }
    var tail = 'L' + (R + 1) + ' ' + B + 'Z';
    var crisp = 'crispEdges';
    el(svg, 'path', { d: de + tail, fill: '#008000', 'shape-rendering': crisp });
    el(svg, 'path', { d: dc + tail, fill: '#00ba00', 'shape-rendering': crisp });
    el(svg, 'path', { d: dc2 + tail, fill: '#00cc00', 'shape-rendering': crisp });
    el(svg, 'rect', { x: L, y: B - 9, width: R - L + 1, height: 9, fill: '#00c000' });

    for (v = 0; v <= c.max; v += c.step) {
      y = B - v * c.ppu;
      el(svg, 'path', { d: 'M' + (L - 5) + ' ' + (y + .5) + 'H' + L, stroke: '#111', fill: 'none' });
      el(svg, 'text', { x: L - 7, y: y + 5, 'text-anchor': 'end' }, fmt(v));
    }
    c.dates.forEach(function (d) {
      el(svg, 'path', { d: 'M' + (d[0] + .5) + ' ' + B + 'V' + (B + 5), stroke: '#111', fill: 'none' });
      el(svg, 'text', { x: d[0], y: 875, 'text-anchor': 'middle' }, d[1]);
    });
  }

  draw({
    id: 'chart1', left: 597, right: 1093, crop: 520, top: 220, step: 5000, max: 125000, ppu: 24.03 / 5000,
    dates: [[674, '12/2/2014'], [774, '12/2/2015'], [873, '12/1/2016'], [972, '12/1/2017'], [1071, '12/1/2018']],
    equity: [[202,470],[215,470],[235,490],[245,503],[265,495],[285,465],[297,437],[318,452],[330,470],[345,425],[365,460],[372,497],[385,450],[403,385],[415,395],[422,382],[432,410],[450,420],[468,365],[485,375],[490,395],[510,395],[530,385],[550,385],[565,380],[590,375],[592,445],[615,458],[640,418],[660,425],[685,435],[690,500],[712,510],[730,500],[750,465],[765,470],[780,520],[795,490],[810,548],[830,480],[850,462],[885,455],[910,480],[930,450],[945,432],[960,410],[975,365],[990,345],[1020,340],[1025,315],[1040,285],[1055,235],[1075,255],[1090,235],[1110,280],[1120,250],[1150,220],[1175,185],[1190,200],[1210,150],[1222,60],[1235,170],[1255,105],[1270,205],[1300,185],[1325,125],[1335,180],[1350,120],[1375,100],[1398,108],[1410,180],[1440,195],[1455,265],[1475,260],[1490,190],[1497,155]],
    cash: [[202,-300],[212,-170],[230,-250],[242,-330],[255,-120],[268,60],[272,150],[275,320],[285,580],[300,660],[320,260],[330,420],[345,660],[358,290],[372,-330],[385,240],[395,680],[405,765],[418,620],[432,300],[440,210],[450,170],[458,400],[470,650],[480,380],[492,270],[505,350],[510,500],[520,190],[530,280],[540,120],[550,100],[562,-50],[570,130],[580,150],[590,-50],[600,-410],[610,-100],[620,-320],[630,0],[640,220],[645,520],[655,320],[665,400],[680,170],[690,0],[700,-450],[715,-370],[728,0],[740,280],[760,630],[780,240],[785,50],[795,380],[800,570],[812,130],[830,740],[850,670],[860,520],[872,280],[885,400],[905,30],[915,250],[925,340],[935,420],[945,360],[960,620],[985,780],[1000,700],[1015,530],[1030,500],[1045,400],[1058,520],[1078,280],[1090,500],[1100,300],[1115,0],[1125,290],[1135,310],[1150,500],[1165,290],[1190,330],[1205,500],[1220,790],[1232,400],[1238,-50],[1255,400],[1262,150],[1272,-400],[1295,0],[1305,270],[1325,550],[1335,200],[1348,510],[1365,320],[1385,290],[1400,280],[1405,0],[1418,-580],[1430,-300],[1438,-370],[1448,-200],[1462,-640],[1475,-250],[1480,100],[1490,500],[1497,680]]
  });

  draw({
    id: 'chart2', left: 1388, right: 1884, crop: 1320, top: 220, step: 10000, max: 230000, ppu: 25.83 / 10000,
    dates: [[1427, '12/3/2009'], [1526, '12/3/2011'], [1625, '12/2/2013'], [1724, '12/2/2015'], [1824, '12/1/2017']],
    equity: [[178,1140],[190,1060],[200,1030],[205,975],[215,950],[230,975],[238,910],[255,835],[265,825],[275,870],[292,820],[305,860],[320,790],[332,745],[342,810],[352,815],[365,810],[375,850],[385,790],[400,715],[415,680],[425,640],[437,605],[447,645],[465,595],[480,640],[495,650],[500,710],[512,690],[525,665],[535,750],[545,765],[560,660],[580,610],[595,650],[605,680],[625,700],[640,665],[660,710],[680,680],[690,620],[715,600],[730,545],[745,580],[755,515],[770,520],[785,480],[805,460],[830,400],[845,455],[875,390],[890,420],[900,385],[912,420],[925,315],[940,350],[960,305],[975,345],[1015,330],[1020,415],[1040,430],[1050,395],[1065,410],[1075,470],[1085,490],[1100,425],[1115,480],[1125,450],[1132,490],[1150,415],[1170,420],[1180,440],[1200,405],[1215,320],[1235,310],[1255,220],[1275,240],[1285,265],[1305,205],[1325,170],[1338,60],[1350,170],[1352,115],[1365,205],[1385,150],[1410,135],[1425,140],[1430,195],[1445,205],[1455,285],[1465,270],[1475,160]],
    cash: [[178,120],[183,400],[195,730],[205,700],[218,840],[228,340],[237,840],[245,600],[255,855],[265,600],[270,170],[280,480],[293,760],[300,300],[305,50],[312,400],[320,825],[332,400],[342,-110],[350,250],[355,-85],[365,330],[375,150],[388,830],[400,760],[415,740],[432,490],[440,200],[447,-125],[455,300],[465,650],[472,200],[480,-250],[490,330],[500,-300],[510,290],[518,-45],[525,620],[530,660],[537,-80],[548,100],[560,810],[575,520],[590,70],[602,-150],[615,120],[630,620],[640,420],[655,60],[672,370],[690,660],[705,300],[715,220],[730,750],[743,-75],[752,760],[765,100],[775,760],[790,450],[805,300],[820,400],[835,200],[847,-285],[858,300],[870,700],[890,650],[905,200],[912,-470],[920,650],[925,740],[935,300],[945,-195],[955,400],[960,590],[975,250],[1000,260],[1008,-140],[1015,300],[1025,-540],[1035,-400],[1048,570],[1060,200],[1075,-510],[1085,-390],[1100,620],[1117,-70],[1128,300],[1140,750],[1155,350],[1178,-150],[1190,260],[1215,740],[1225,430],[1245,180],[1265,-130],[1275,200],[1282,-60],[1295,200],[1305,190],[1325,300],[1335,740],[1345,-490],[1353,500],[1362,-625],[1370,620],[1385,100],[1400,100],[1415,220],[1433,-690],[1445,-260],[1457,-675],[1468,520],[1475,720]]
  });
})();
```
